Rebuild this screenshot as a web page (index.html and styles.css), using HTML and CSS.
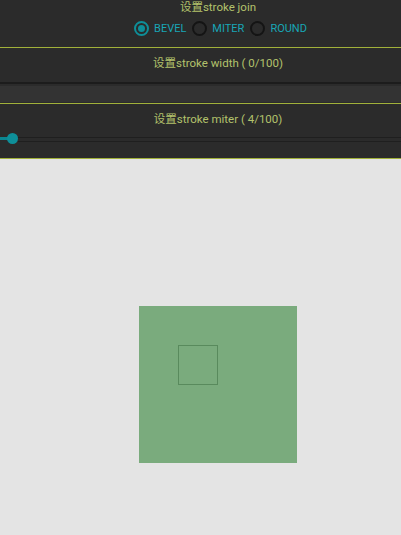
FILE: index.html
```html
<!DOCTYPE html>
<html>
<head>
<meta charset="utf-8">
<link rel="stylesheet" href="styles.css">
</head>
<body>
<div class="panel">
  <div class="title t1">设置stroke join</div>
  <div class="radios">
    <label class="radio"><span class="ring on"><span class="dot"></span></span><span class="rlabel">BEVEL</span></label>
    <label class="radio"><span class="ring"></span><span class="rlabel">MITER</span></label>
    <label class="radio"><span class="ring"></span><span class="rlabel last">ROUND</span></label>
  </div>
  <div class="divider"></div>
  <div class="title t2">设置stroke width ( 0/100)</div>
  <div class="seek1">
    <div class="line"></div>
    <div class="band"></div>
  </div>
  <div class="divider"></div>
  <div class="title t3">设置stroke miter ( 4/100)</div>
  <div class="seek2">
    <div class="fill"></div>
    <div class="thumb"></div>
    <div class="track"></div>
  </div>
  <div class="divider"></div>
</div>
<div class="canvas">
  <div class="square">
    <div class="inner"></div>
  </div>
</div>
</body>
</html>
```
FILE: styles.css
```css
html, body {
  margin: 0;
  padding: 0;
}
body {
  background: #e4e4e4;
  font-family: Roboto, "Noto Sans CJK SC", sans-serif;
  width: 401px;
  height: 535px;
  overflow: hidden;
}
.panel {
  background: #2b2b2b;
}
.title {
  color: #b3c26c;
  font-size: 11.5px;
  text-align: center;
  line-height: 15px;
  padding-left: 35px;
}
.t1 {
  height: 17px;
}
.radios {
  display: flex;
  justify-content: center;
  align-items: center;
  height: 22px;
  padding-left: 40px;
  padding-bottom: 8px;
}
.radio {
  display: flex;
  align-items: center;
}
.ring {
  width: 15px;
  height: 15px;
  border-radius: 50%;
  border: 2px solid #141414;
  box-sizing: border-box;
  display: flex;
  align-items: center;
  justify-content: center;
}
.ring.on {
  border-color: #0e8f99;
}
.dot {
  width: 7px;
  height: 7px;
  border-radius: 50%;
  background: #0e8f99;
}
.rlabel {
  color: #18a6b6;
  font-size: 11px;
  margin-left: 5px;
  margin-right: 6px;
}
.rlabel.last {
  margin-right: 0;
}
.divider {
  height: 1px;
  background: #a1b13a;
}
.t2 {
  height: 15px;
  padding-top: 8px;
}
.seek1 {
  height: 32px;
  display: flex;
  flex-direction: column;
}
.seek1 .line {
  margin-top: 11px;
  height: 2px;
  background: #1c1c1c;
}
.seek1 .band {
  margin-top: 2px;
  height: 16px;
  background: #333333;
}
.t3 {
  height: 15px;
  padding-top: 8px;
}
.seek2 {
  position: relative;
  height: 31px;
}
.seek2 .fill {
  position: absolute;
  left: 0;
  top: 10px;
  width: 10px;
  height: 3px;
  background: #0c8791;
}
.seek2 .thumb {
  position: absolute;
  left: 7px;
  top: 6px;
  width: 11px;
  height: 11px;
  border-radius: 50%;
  background: #0e8f99;
}
.seek2 .track {
  position: absolute;
  left: 18px;
  right: 0;
  top: 10px;
  height: 3px;
  border-top: 1px solid #1f1f1f;
  border-bottom: 1px solid #1f1f1f;
}
.canvas {
  padding-top: 147px;
  padding-left: 139px;
}
.square {
  width: 158px;
  height: 157px;
  background: #7aab7d;
  padding: 39px 0 0 39px;
  box-sizing: border-box;
}
.inner {
  width: 40px;
  height: 40px;
  border: 1.5px solid #598a5d;
  box-sizing: border-box;
}
```
